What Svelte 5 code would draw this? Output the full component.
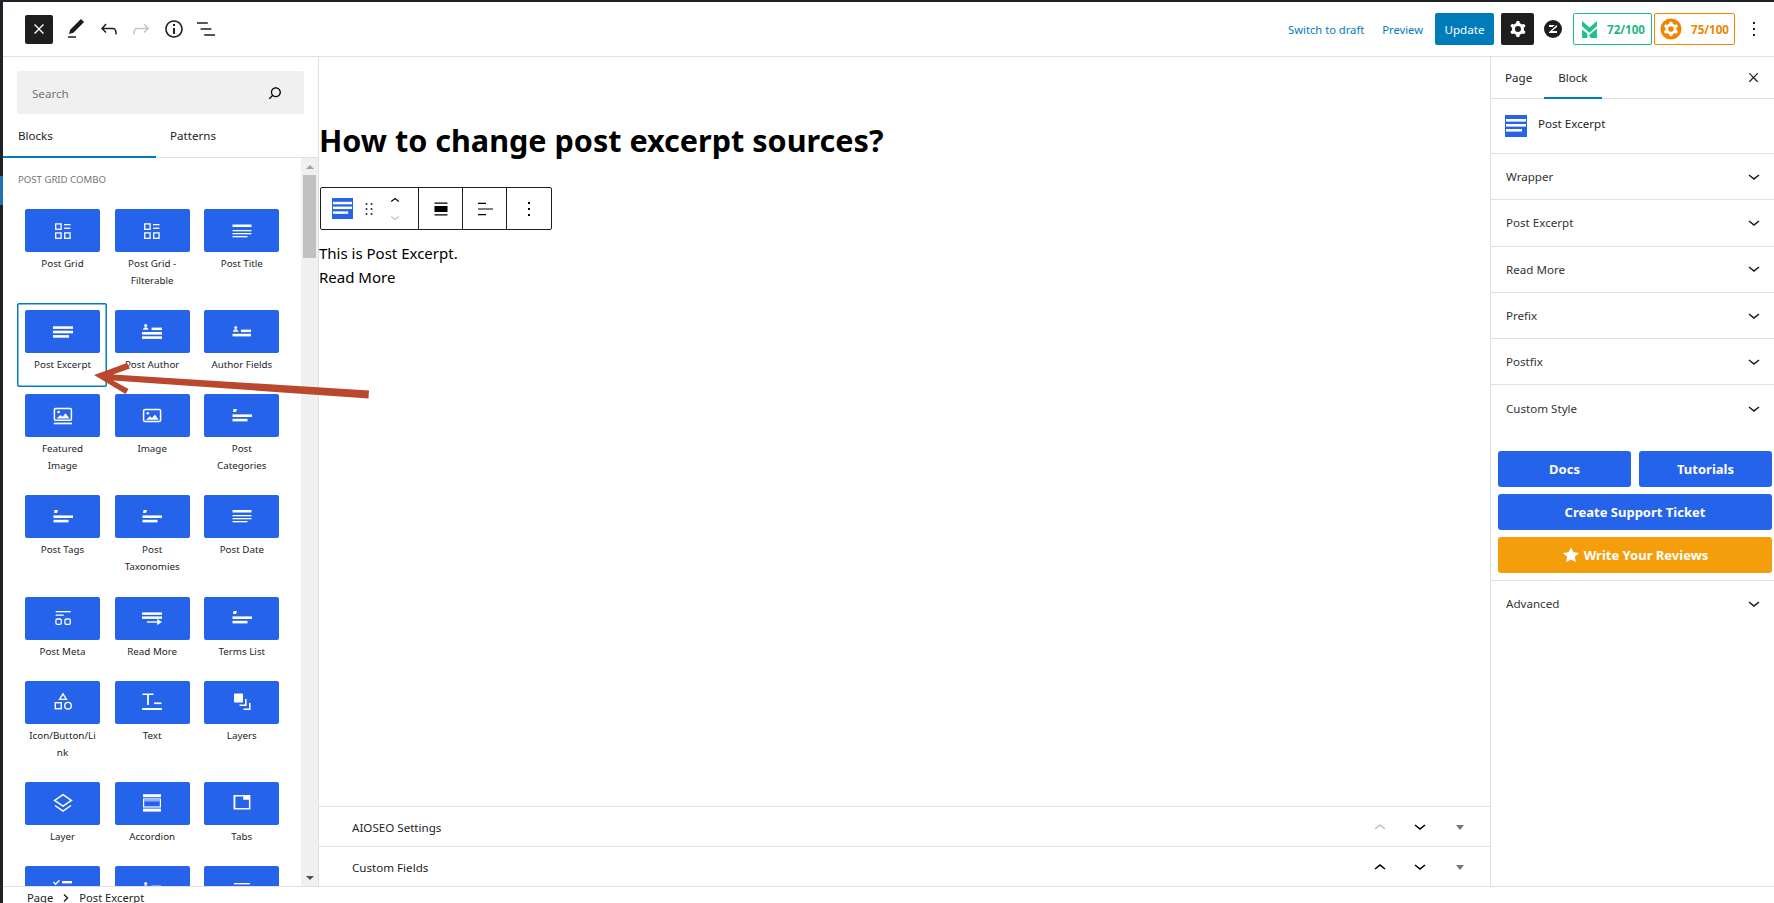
<script>
  // simple icon shapes, all in a 24 box
  const wp = {
    pencil: '<path d="M20.1 5.1L16.9 2 6.2 12.7l-1.3 4.4 4.5-1.3L20.1 5.1zM4 20.8h8v-1.5H4v1.5z"/>',
    undo: '<path d="M18.3 11.7c-.6-.6-1.4-.9-2.3-.9H6.7l2.9-3.3-1.1-1-4.5 5L8.5 16l1-1-2.7-2.7H16c.5 0 .9.2 1.3.5 1 1 1 3.4 1 4.5v.3h1.5v-.2c0-1.5 0-4.3-1.5-5.7z"/>',
    redo: '<path d="M15.6 6.5l-1.1 1 2.9 3.3H8c-.9 0-1.7.3-2.3.9-1.4 1.5-1.4 4.2-1.4 5.6v.2h1.5v-.3c0-1.1 0-3.5 1-4.5.3-.3.7-.5 1.3-.5h9.2L14.5 15l1.1 1.1 4.6-4.6-4.6-5z"/>',
    info: '<path d="M12 3.2c-4.8 0-8.8 3.9-8.8 8.8 0 4.8 3.9 8.8 8.8 8.8 4.8 0 8.8-3.9 8.8-8.8 0-4.8-4-8.8-8.8-8.8zm0 16c-4 0-7.2-3.3-7.2-7.2C4.8 8 8 4.8 12 4.8s7.2 3.3 7.2 7.2c0 4-3.2 7.2-7.2 7.2zM11 17h2v-6h-2v6zm0-8h2V7h-2v2z"/>',
    list: '<path d="M13.8 5.2H3v1.5h10.8V5.2zm-3.6 12v1.5H21v-1.5H10.2zm7.2-6H6.6v1.5h10.8v-1.5z"/>',
    search: '<path d="M13 5c-3.3 0-6 2.7-6 6 0 1.4.5 2.7 1.3 3.7l-3.8 3.8 1.1 1.1 3.8-3.8c1 .8 2.3 1.3 3.7 1.3 3.3 0 6-2.7 6-6S16.3 5 13 5zm0 10.5c-2.5 0-4.5-2-4.5-4.5s2-4.5 4.5-4.5 4.5 2 4.5 4.5-2 4.5-4.5 4.5z"/>',
    cog: '<path fill-rule="evenodd" d="M10.289 4.836A1 1 0 0111.275 4h1.306a1 1 0 01.987.836l.244 1.466c.787.26 1.503.679 2.108 1.218l1.393-.522a1 1 0 011.216.437l.653 1.13a1 1 0 01-.23 1.273l-1.148.944a6.025 6.025 0 010 2.435l1.149.946a1 1 0 01.23 1.272l-.653 1.13a1 1 0 01-1.216.437l-1.394-.522c-.605.54-1.32.958-2.108 1.218l-.244 1.466a1 1 0 01-.987.836h-1.306a1 1 0 01-.986-.836l-.244-1.466a5.995 5.995 0 01-2.108-1.218l-1.394.522a1 1 0 01-1.217-.436l-.653-1.131a1 1 0 01.23-1.272l1.149-.946a6.026 6.026 0 010-2.435l-1.148-.944a1 1 0 01-.23-1.272l.653-1.131a1 1 0 011.217-.437l1.393.522a5.994 5.994 0 012.108-1.218l.244-1.466zM14.929 12a3 3 0 11-6 0 3 3 0 016 0z"/>',
    kebab: '<path d="M13 19h-2v-2h2v2zm0-6h-2v-2h2v2zm0-6h-2V5h2v2z"/>',
    close: '<path d="M13.4 12l6-6L18 4.6l-6 6-6-6L4.6 6l6 6-6 6L6 19.4l6-6 6 6 1.4-1.4z"/>',
    down: '<path d="M17.5 10.6L12 15l-5.5-4.4.9-1.2L12 13l4.5-3.6 1 1.2z"/>',
    up: '<path d="M6.5 13.4L12 9l5.5 4.4-.9 1.2L12 11l-4.5 3.6-1-1.2z"/>',
    drag: '<path d="M8 7h2V5H8v2zm0 6h2v-2H8v2zm0 6h2v-2H8v2zm6-14v2h2V5h-2zm0 8h2v-2h-2v2zm0 6h2v-2h-2v2z"/>',
    wide: '<path d="M5.5 5.6h13v1.2h-13zM5.5 9h13v6h-13zM5.5 17.2h13v1.2h-13z"/>',
    alignL: '<path d="M5 5.8h8v1.200H5zM5 11.4h15v1.200H5zM5 17h8v1.200H5z"/>'
  };

  const outlineBox = 'fill="none" stroke="#fff" stroke-width="1.3"';
  const catShape = '<path d="M3.5 5h3.5l-1 3H3z"/><rect x="2.5" y="10.4" width="19.5" height="2.6"/><rect x="2.5" y="14.8" width="15" height="2.6"/>';

  const blockIcons = {
    grid: `<rect x="4.7" y="4.9" width="5.4" height="5.4" ${outlineBox}/><rect x="4.7" y="13.9" width="5.4" height="5.4" ${outlineBox}/><rect x="13.7" y="13.9" width="5.4" height="5.4" ${outlineBox}/><rect x="13" y="5" width="6.5" height="1.3"/><rect x="13" y="8.6" width="6.5" height="1.3"/>`,
    title: '<rect x="2.5" y="5.5" width="19" height="2.5"/><rect x="2.5" y="11" width="19" height="1.3"/><rect x="2.5" y="14" width="19" height="1.3"/><rect x="2.5" y="17" width="15" height="1.3"/>',
    excerpt: '<rect x="2" y="6.3" width="20" height="2.6"/><rect x="2" y="10.7" width="20" height="2.6"/><rect x="2" y="15.1" width="16" height="2.6"/>',
    author: '<circle cx="5.7" cy="5.6" r="1.5"/><path d="M3 9.7c0-1.6 1.2-2.5 2.7-2.5s2.7.9 2.7 2.5z"/><rect x="11.6" y="7.6" width="10.4" height="2.5"/><rect x="2" y="12" width="20" height="2.6"/><rect x="2" y="16.3" width="20" height="2.6"/>',
    fields: '<circle cx="5.7" cy="7.6" r="1.5"/><path d="M3 11.7c0-1.6 1.2-2.5 2.7-2.5s2.7.9 2.7 2.5z"/><rect x="11" y="9.6" width="10" height="2.5"/><rect x="2.5" y="13.8" width="18.5" height="2.6"/>',
    featured: '<rect x="3.4" y="4.4" width="17" height="11.8" rx="1.2" fill="none" stroke="#fff" stroke-width="1.5"/><circle cx="7.6" cy="8" r="1.3"/><path d="M5.5 14.5l4-3.4 2 1.6 3-3.4 4 5.2z"/><rect x="2.8" y="18.6" width="18.2" height="1.7"/>',
    image: '<rect x="3.6" y="5.6" width="17" height="12" rx="1.5" fill="none" stroke="#fff" stroke-width="1.5"/><circle cx="7.8" cy="9.2" r="1.3"/><path d="M6 15.8l4-3.5 2 1.6 3-3.4 3.6 5.3z"/>',
    category: catShape,
    date: '<rect x="2.5" y="5" width="19" height="2.5"/><rect x="2.5" y="10" width="19" height="1.3"/><rect x="2.5" y="13" width="19" height="1.3"/><rect x="2.5" y="16" width="15" height="1.3"/>',
    meta: '<rect x="4.7" y="5" width="15" height="1.3"/><rect x="4.7" y="8.5" width="8" height="1.3"/><rect x="4.9" y="13" width="5.4" height="5.4" rx="1.4" fill="none" stroke="#fff" stroke-width="1.3"/><rect x="13.9" y="13" width="5.4" height="5.4" rx="1.4" fill="none" stroke="#fff" stroke-width="1.3"/>',
    more: '<rect x="2" y="6.4" width="20" height="2.5"/><rect x="2" y="10.4" width="20" height="2.5"/><rect x="7" y="15.3" width="13" height="1.4"/><path d="M17.2 13l4.8 3-4.8 3z"/>',
    icon: '<path d="M12 3.8l3.4 5.6H8.6z" fill="none" stroke="#fff" stroke-width="1.4"/><rect x="4.3" y="12.7" width="6" height="6" fill="none" stroke="#fff" stroke-width="1.4"/><circle cx="17" cy="15.7" r="3.3" fill="none" stroke="#fff" stroke-width="1.4"/>',
    text: '<path d="M2.5 3.5h11v1.6H8.9V15H7.1V5.1H2.5z"/><rect x="14" y="12.4" width="7.5" height="1.7"/><rect x="2" y="18" width="20" height="2"/>',
    layers: '<rect x="4" y="3.5" width="9" height="9" rx=".8"/><path d="M15 9v5.5H9.5v1.6h7.1V9zM19 13v5.5H13.5v1.6h7.1V13z"/>',
    layer: '<path d="M12 3.6l8.4 5.8L12 15 3.6 9.4z" fill="none" stroke="#fff" stroke-width="1.5"/><path d="M4 14.5l8 5.6 8-5.6" fill="none" stroke="#fff" stroke-width="1.5"/>',
    accordion: '<rect x="3" y="3.2" width="18" height="3"/><rect x="3.6" y="8" width="16.8" height="8" fill="none" stroke="#fff" stroke-width="1.2"/><rect x="4" y="8.5" width="16" height="2" fill="#8fb0f5"/><rect x="3" y="17.6" width="18" height="3"/>',
    tabs: '<path d="M4 4h16.4v14.4H3.5V4zm1.4 1.5v11.4h13.5V8.8h-5.7V5.5z" fill-rule="evenodd"/>',
    checklist: '<path d="M3 5.5l1.6 1.7L8 3.8l1 1L4.6 9.2 2 6.5z"/><rect x="11" y="5" width="10" height="2.4"/><rect x="3" y="11.5" width="5" height="5" fill="none" stroke="#fff" stroke-width="1.3"/><rect x="11" y="11" width="10" height="2.4"/>',
    lines: '<rect x="4" y="7" width="16" height="1.4"/><rect x="4" y="11" width="9" height="1.4"/><rect x="4" y="15" width="13" height="1.4"/>'
  };

  // the last row is cut by the footer, its labels never show
  const blocks = [
    ['Post Grid', 'grid'], ['Post Grid - Filterable', 'grid'], ['Post Title', 'title'],
    ['Post Excerpt', 'excerpt'], ['Post Author', 'author'], ['Author Fields', 'fields'],
    ['Featured Image', 'featured'], ['Image', 'image'], ['Post Categories', 'category'],
    ['Post Tags', 'category'], ['Post Taxonomies', 'category'], ['Post Date', 'date'],
    ['Post Meta', 'meta'], ['Read More', 'more'], ['Terms List', 'category'],
    ['Icon/Button/Link', 'icon'], ['Text', 'text'], ['Layers', 'layers'],
    ['Layer', 'layer'], ['Accordion', 'accordion'], ['Tabs', 'tabs'],
    ['', 'checklist'], ['', 'fields'], ['', 'lines']
  ];

  const panels = ['Wrapper', 'Post Excerpt', 'Read More', 'Prefix', 'Postfix', 'Custom Style'];
</script>

<div class="page">
  <div class="topline"></div>
  <div class="frame">
    <div class="adminbar"><span class="adminmark"></span></div>
    <div class="shell">
      <header>
        <button class="close-btn" aria-label="Close"><svg viewBox="0 0 24 24" width="16" height="16">{@html wp.close}</svg></button>
        <svg class="tool" viewBox="0 0 24 24">{@html wp.pencil}</svg>
        <svg class="tool" viewBox="0 0 24 24">{@html wp.undo}</svg>
        <svg class="tool muted" viewBox="0 0 24 24">{@html wp.redo}</svg>
        <svg class="tool" viewBox="0 0 24 24">{@html wp.info}</svg>
        <svg class="tool" viewBox="0 0 24 24">{@html wp.list}</svg>

        <div class="actions">
          <span class="link draft">Switch to draft</span>
          <span class="link preview">Preview</span>
          <button class="update">Update</button>
          <button class="settings" aria-label="Settings"><svg viewBox="0 0 24 24" width="24" height="24">{@html wp.cog}</svg></button>
          <svg class="zlogo" viewBox="0 0 18 18" width="18" height="18">
            <circle cx="9" cy="9" r="9" fill="#1e1e1e" />
            <path d="M5 5h8v2L8 11h5v2H5v-2l5-4H5z" fill="#fff" />
            <path d="M3 13L14 3" stroke="#1e1e1e" stroke-width="1.5" />
          </svg>
          <div class="score green">
            <svg viewBox="0 0 14 16" width="15" height="17" fill="#1fbf8f">
              <path d="M0 0L7 6 14 0V5L7 11 0 5z" />
              <path d="M0 8L5 12V16H0z" />
              <path d="M14 7V16H8L6.5 13.5z" />
            </svg>
            <span>72/100</span>
          </div>
          <div class="score orange">
            <svg viewBox="0 0 24 24" width="22" height="22">
              <circle cx="12" cy="12" r="11.5" fill="#f18500" />
              <g fill="#fff">{@html wp.cog}</g>
            </svg>
            <span>75/100</span>
          </div>
          <svg class="more" viewBox="0 0 24 24" width="24" height="24">{@html wp.kebab}</svg>
        </div>
      </header>

      <div class="workspace">
        <aside class="inserter">
          <div class="search">
            <span>Search</span>
            <svg viewBox="0 0 24 24" width="20" height="20">{@html wp.search}</svg>
          </div>
          <div class="ins-tabs">
            <div class="ins-tab active">Blocks</div>
            <div class="ins-tab">Patterns</div>
          </div>
          <div class="scrollwrap">
            <div class="blocklist">
              <div class="cat">POST GRID COMBO</div>
              <div class="grid">
                {#each blocks as [name, icon]}
                  <div class="item" class:selected={name === 'Post Excerpt'}>
                    <div class="blockbtn">
                      <svg viewBox="0 0 24 24" width="24" height="24" fill="#fff">{@html blockIcons[icon]}</svg>
                    </div>
                    {#if name}<div class="label">{name}</div>{/if}
                  </div>
                {/each}
              </div>
            </div>
            <div class="scrollbar">
              <i class="arrow-up"></i>
              <div class="thumb"></div>
              <i class="arrow-down"></i>
            </div>
          </div>
        </aside>

        <main>
          <div class="canvas">
            <h1>How to change post excerpt sources?</h1>
            <div class="blocktools">
              <div class="tgroup first">
                <svg class="blockicon" viewBox="0 0 22 22" width="21" height="21">
                  <rect width="22" height="22" fill="#2563eb" />
                  <rect x="1" y="4" width="20" height="2.6" fill="#fff" />
                  <rect x="1" y="9" width="20" height="2.6" fill="#fff" />
                  <rect x="1" y="14" width="16" height="2.6" fill="#fff" />
                </svg>
                <svg class="drag" viewBox="0 0 24 24" width="20" height="20">{@html wp.drag}</svg>
                <div class="movers">
                  <svg viewBox="0 0 24 24" width="22" height="18">{@html wp.up}</svg>
                  <svg class="muted" viewBox="0 0 24 24" width="22" height="18">{@html wp.down}</svg>
                </div>
              </div>
              <div class="tgroup"><svg viewBox="0 0 24 24" width="24" height="24">{@html wp.wide}</svg></div>
              <div class="tgroup"><svg viewBox="0 0 24 24" width="24" height="24">{@html wp.alignL}</svg></div>
              <div class="tgroup"><svg viewBox="0 0 24 24" width="24" height="24">{@html wp.kebab}</svg></div>
            </div>
            <p>This is Post Excerpt.</p>
            <p>Read More</p>
          </div>

          <div class="metabox">
            <span>AIOSEO Settings</span>
            <div class="mb-controls">
              <svg class="muted" viewBox="0 0 24 24" width="24" height="24">{@html wp.up}</svg>
              <svg viewBox="0 0 24 24" width="24" height="24">{@html wp.down}</svg>
              <i class="caret"></i>
            </div>
          </div>
          <div class="metabox">
            <span>Custom Fields</span>
            <div class="mb-controls">
              <svg viewBox="0 0 24 24" width="24" height="24">{@html wp.up}</svg>
              <svg viewBox="0 0 24 24" width="24" height="24">{@html wp.down}</svg>
              <i class="caret"></i>
            </div>
          </div>
        </main>

        <aside class="sidebar">
          <div class="side-tabs">
            <div class="side-tab">Page</div>
            <div class="side-tab active">Block</div>
            <svg class="side-close" viewBox="0 0 24 24" width="15" height="15">{@html wp.close}</svg>
          </div>
          <div class="blockcard">
            <svg viewBox="0 0 22 22" width="22" height="22">
              <rect width="22" height="22" fill="#2563eb" />
              <rect x="1" y="4" width="20" height="2.6" fill="#fff" />
              <rect x="1" y="9" width="20" height="2.6" fill="#fff" />
              <rect x="1" y="14" width="16" height="2.6" fill="#fff" />
            </svg>
            <span>Post Excerpt</span>
          </div>
          {#each panels as p, i}
            <div class="panel" class:last={i === panels.length - 1}>
              <span>{p}</span>
              <svg viewBox="0 0 24 24" width="24" height="24">{@html wp.down}</svg>
            </div>
          {/each}
          <div class="support">
            <div class="two">
              <div class="sbtn">Docs</div>
              <div class="sbtn">Tutorials</div>
            </div>
            <div class="sbtn">Create Support Ticket</div>
            <div class="sbtn amber">
              <svg viewBox="0 0 24 24" width="18" height="18" fill="#fff"><path d="M12 1.5l3.2 6.9 7.5.9-5.6 5.1 1.5 7.4L12 18.1l-6.6 3.7 1.5-7.4L1.3 9.3l7.5-.9z" /></svg>
              Write Your Reviews
            </div>
          </div>
          <div class="panel last">
            <span>Advanced</span>
            <svg viewBox="0 0 24 24" width="24" height="24">{@html wp.down}</svg>
          </div>
        </aside>
      </div>

      <footer>
        <span>Page</span>
        <svg viewBox="0 0 10 10" width="10" height="10"><path d="M3 1.5L6.5 5 3 8.5" fill="none" stroke="#1e1e1e" stroke-width="1.4" /></svg>
        <span>Post Excerpt</span>
      </footer>
    </div>
  </div>

  <!-- annotation drawn over the screenshot -->
  <svg class="annotation" viewBox="0 0 380 60" width="380" height="60">
    <path fill="#b9482e" d="M94 15L127 3l3 5.5L113 14.5 369 30.5l-.5 8L113 20.5l15.5 8.5-3 5z" />
  </svg>
</div>

<style>
  :global(body) {
    margin: 0;
    background: #fff;
  }

  .page {
    position: relative;
    width: 1774px;
    height: 903px;
    overflow: hidden;
    font-family: "Noto Sans", "Open Sans", sans-serif;
    color: #1e1e1e;
    background: #fff;
  }

  .topline {
    height: 2px;
    background: #1d2327;
  }

  .frame {
    display: flex;
    height: 901px;
  }

  .adminbar {
    width: 3px;
    flex: none;
    background: #1d2327;
    padding-top: 174px;
    box-sizing: border-box;
  }

  .adminmark {
    display: block;
    height: 29px;
    background: #2271b1;
  }

  .shell {
    flex: 1;
    min-width: 0;
    display: flex;
    flex-direction: column;
  }

  header {
    height: 54px;
    flex: none;
    display: flex;
    align-items: center;
    padding-left: 22px;
    border-bottom: 1px solid #e0e0e0;
  }

  button {
    border: 0;
    padding: 0;
    font: inherit;
  }

  .close-btn {
    width: 28px;
    height: 29px;
    background: #1e1e1e;
    border-radius: 2px;
    display: flex;
    align-items: center;
    justify-content: center;
    margin-right: 7px;
  }

  .close-btn svg {
    fill: #fff;
  }

  .tool {
    width: 24px;
    height: 24px;
    margin: 0 4.25px;
    fill: #1e1e1e;
  }

  .muted {
    fill: #c4c4c4;
  }

  .actions {
    margin-left: auto;
    display: flex;
    align-items: center;
    height: 100%;
  }

  .link {
    color: #007cba;
    font-size: 11.2px;
  }

  .draft {
    margin-right: 18px;
  }

  .preview {
    margin-right: 12px;
  }

  .update {
    width: 59px;
    height: 32px;
    background: #007cba;
    color: #fff;
    font-size: 11.6px;
    border-radius: 2px;
  }

  .settings {
    width: 33px;
    height: 32px;
    margin-left: 7px;
    background: #1e1e1e;
    border-radius: 2px;
    display: flex;
    align-items: center;
    justify-content: center;
    fill: #fff;
  }

  .zlogo {
    margin: 0 11px 0 10px;
  }

  .score {
    height: 32px;
    box-sizing: border-box;
    border: 1px solid;
    border-radius: 2px;
    display: flex;
    align-items: center;
    font-size: 11.6px;
    font-weight: 700;
  }

  .score.green {
    width: 79px;
    padding-left: 8px;
    gap: 10px;
    border-color: #1fbf8f;
    color: #27b584;
    margin-right: 2px;
  }

  .score.orange {
    width: 81px;
    padding-left: 5px;
    gap: 9px;
    border-color: #f18500;
    color: #f18500;
  }

  .more {
    margin: 0 8px 0 7px;
    fill: #1e1e1e;
  }

  .workspace {
    flex: 1;
    min-height: 0;
    display: flex;
  }

  .inserter {
    width: 315px;
    flex: none;
    border-right: 1px solid #e0e0e0;
    display: flex;
    flex-direction: column;
    min-height: 0;
  }

  .search {
    margin: 14px 14px 0;
    height: 43px;
    background: #f0f0f0;
    border-radius: 2px;
    display: flex;
    align-items: center;
    justify-content: space-between;
    padding: 1px 19px 0 15px;
    box-sizing: border-box;
    font-size: 11.6px;
    color: #757575;
  }

  .ins-tabs {
    display: flex;
    flex: none;
    border-bottom: 1px solid #e0e0e0;
    box-sizing: border-box;
    height: 44px;
  }

  .ins-tab {
    width: 153px;
    box-sizing: border-box;
    padding: 0 14px;
    height: 44px;
    line-height: 43px;
    font-size: 11.6px;
  }

  .ins-tab.active {
    border-bottom: 2px solid #007cba;
    padding-left: 15px;
  }

  .scrollwrap {
    flex: 1;
    min-height: 0;
    display: flex;
    overflow: hidden;
  }

  .blocklist {
    flex: 1;
    min-width: 0;
    overflow: hidden;
  }

  .cat {
    font-size: 9.6px;
    color: #757575;
    padding: 15px 0 0 15px;
    line-height: 13px;
  }

  .grid {
    margin: 16px 0 0 14px;
    display: grid;
    grid-template-columns: repeat(3, 89.67px);
  }

  .item {
    box-sizing: border-box;
    padding: 7px 6.67px 13.5px 8px;
    text-align: center;
    border-radius: 2px;
  }

  .item.selected {
    box-shadow: inset 0 0 0 1.5px #007cba;
  }

  .blockbtn {
    height: 43px;
    background: #2563eb;
    border-radius: 2px;
    display: flex;
    align-items: center;
    justify-content: center;
  }

  .label {
    margin-top: 4px;
    padding: 0 3px;
    font-size: 9.8px;
    line-height: 16.8px;
    color: #1e1e1e;
    overflow-wrap: anywhere;
  }

  .scrollbar {
    width: 17px;
    flex: none;
    background: #f0f0f0;
    display: flex;
    flex-direction: column;
    align-items: center;
    position: relative;
  }

  .arrow-up,
  .arrow-down {
    position: absolute;
    left: 4.5px;
    border-left: 4px solid transparent;
    border-right: 4px solid transparent;
  }

  .arrow-up {
    top: 7px;
    border-bottom: 4px solid #a3a3a3;
  }

  .arrow-down {
    bottom: 6px;
    border-top: 4px solid #505050;
  }

  .thumb {
    width: 13px;
    height: 83px;
    margin-top: 17px;
    background: #c1c1c1;
  }

  main {
    flex: 1;
    min-width: 0;
    display: flex;
    flex-direction: column;
    border-right: 1px solid #e0e0e0;
  }

  .canvas {
    flex: 1;
    padding: 59px 0 0;
  }

  h1 {
    margin: 0;
    font-size: 30.55px;
    line-height: 48px;
    font-weight: 700;
    color: #000;
  }

  .blocktools {
    margin: 23px 0 0 1px;
    width: 232px;
    height: 43px;
    box-sizing: border-box;
    border: 1px solid #1e1e1e;
    border-radius: 2px;
    display: flex;
  }

  .tgroup {
    width: 44px;
    display: flex;
    align-items: center;
    justify-content: center;
    border-left: 1px solid #1e1e1e;
    box-sizing: border-box;
  }

  .tgroup.first {
    width: 97px;
    flex: none;
    border-left: 0;
    justify-content: flex-start;
    padding-left: 11px;
  }

  .drag {
    margin-left: 6px;
  }

  .movers {
    margin-left: 5px;
    display: flex;
    flex-direction: column;
  }

  p {
    margin: 0;
    font-size: 15px;
    line-height: 24px;
    color: #000;
  }

  .blocktools + p {
    margin-top: 11px;
  }

  .metabox {
    height: 40px;
    flex: none;
    box-sizing: border-box;
    border-top: 1px solid #e0e0e0;
    display: flex;
    align-items: center;
    justify-content: space-between;
    padding: 1px 0 0 33px;
    font-size: 11.6px;
  }

  .mb-controls {
    display: flex;
    align-items: center;
    gap: 16px;
    padding-right: 26px;
  }

  .caret {
    width: 0;
    border-left: 4px solid transparent;
    border-right: 4px solid transparent;
    border-top: 5px solid #757575;
    margin-left: 8px;
  }

  .sidebar {
    width: 283px;
    flex: none;
  }

  .side-tabs {
    display: flex;
    border-bottom: 1px solid #e0e0e0;
    box-sizing: border-box;
    height: 42px;
    padding-left: 14px;
    gap: 18px;
    font-size: 11.6px;
  }

  .side-tab {
    line-height: 41px;
    position: relative;
  }

  .side-tab.active::after {
    content: "";
    position: absolute;
    left: -14px;
    right: -14px;
    bottom: -1px;
    height: 2px;
    background: #007cba;
  }

  .side-tab.active {
    margin-left: 8px;
  }

  .side-close {
    margin: 13px 13px 0 auto;
    fill: #1e1e1e;
  }

  .blockcard {
    padding-left: 14px;
    gap: 11px;
    display: flex;
    align-items: flex-start;
    padding-top: 16px;
    box-sizing: border-box;
    border-bottom: 1px solid #e0e0e0;
    font-size: 11.6px;
    height: 55px;
  }

  .blockcard span {
    line-height: 18px;
  }

  .panel {
    height: 46.3px;
    box-sizing: border-box;
    border-bottom: 1px solid #e0e0e0;
    display: flex;
    align-items: center;
    justify-content: space-between;
    padding: 0 8.5px 0 15px;
    font-size: 11.6px;
    color: #333;
  }

  .panel.last {
    border-bottom: 0;
  }

  .panel svg {
    fill: #1e1e1e;
  }

  .support {
    padding: 19px 2px 7px 7px;
    border-bottom: 1px solid #e0e0e0;
    display: flex;
    flex-direction: column;
    gap: 7px;
  }

  .two {
    display: flex;
    gap: 8px;
  }

  .two .sbtn {
    flex: 1;
  }

  .sbtn {
    height: 36px;
    border-radius: 3px;
    background: #2563eb;
    color: #fff;
    font-family: "Noto Sans", sans-serif;
    font-weight: 700;
    font-size: 13px;
    display: flex;
    align-items: center;
    justify-content: center;
    gap: 4px;
  }

  .sbtn.amber {
    background: #f59e0b;
  }

  footer {
    height: 16px;
    flex: none;
    border-top: 1px solid #e0e0e0;
    display: flex;
    align-items: flex-start;
    padding-left: 24px;
    gap: 8px;
    font-size: 11.2px;
    line-height: 22px;
    overflow: hidden;
  }

  footer svg {
    margin-top: 6px;
  }

  svg {
    display: block;
    flex: none;
  }

  .annotation {
    position: absolute;
    left: 0;
    top: 360px;
    pointer-events: none;
  }
</style>
